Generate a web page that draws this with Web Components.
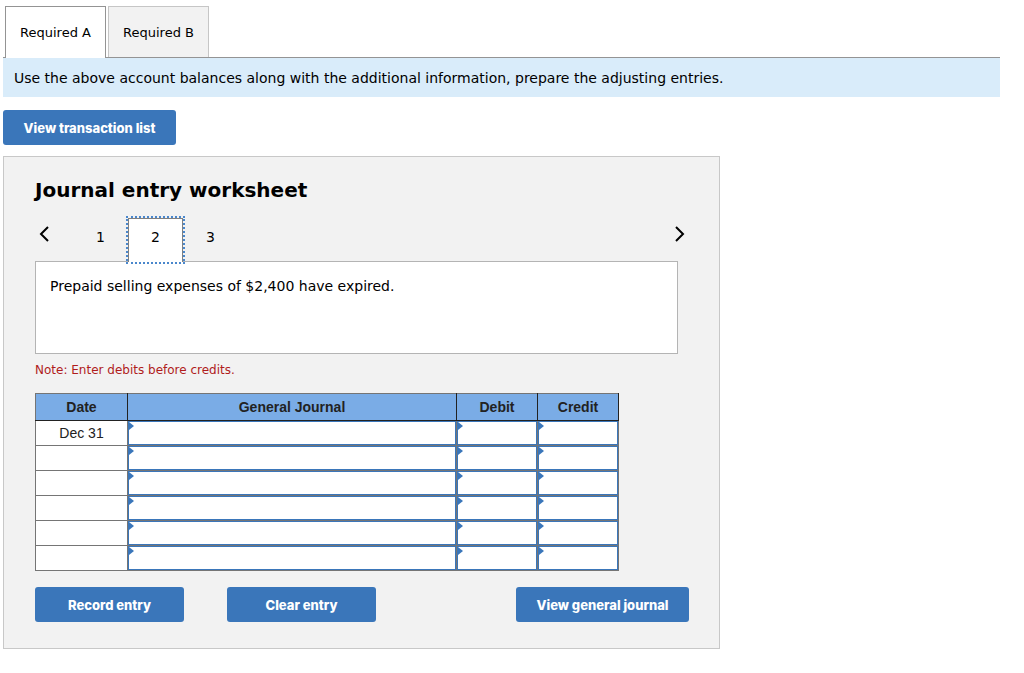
<!DOCTYPE html>
<html lang="en">
<head>
<meta charset="utf-8">
<meta name="viewport" content="width=device-width, initial-scale=1">
<title>Journal entry worksheet</title>
<style>
  body {
    margin: 0;
    padding: 6px 24px 24px 3px;
    background: #fff;
    color: #000;
    font: 14px/20px Verdana, "DejaVu Sans", sans-serif;
    --blue: #3a76ba;
    --panel: #f2f2f2;
  }
  .instructions {
    margin: 0;
    padding: 10px 11px 9px;
    background: #d9ecfa;
  }
  .open-list {
    margin: 13px 0 11px;
  }
</style>
</head>
<body>
  <tab-strip>
    <tab-item selected>Required A</tab-item>
    <tab-item>Required B</tab-item>
  </tab-strip>
  <p class="instructions">Use the above account balances along with the additional information, prepare the adjusting entries.</p>
  <action-button class="open-list" size="large">View transaction list</action-button>
  <journal-worksheet>
    <span slot="title">Journal entry worksheet</span>
    <sheet-pager slot="pager" pages="3" current="2"></sheet-pager>
    <span slot="transaction">Prepaid selling expenses of $2,400 have expired.</span>
    <span slot="note">Note: Enter debits before credits.</span>
    <entry-table slot="entries" date="Dec 31" rows="6"></entry-table>
    <action-button slot="edit">Record entry</action-button>
    <action-button slot="edit">Clear entry</action-button>
    <action-button slot="view" size="large">View general journal</action-button>
  </journal-worksheet>

<script>
  'use strict';
  {
    /**
     * `<tab-strip>` lays its `<tab-item>` children along a bottom rule.
     */
    class TabStrip extends HTMLElement {
      constructor() {
        super();
        this.attachShadow({mode: 'open'});
        this.shadowRoot.innerHTML = `
          <style>
            :host {
              display: flex;
              gap: 2px;
              padding-left: 2px;
              border-bottom: 1px solid #949494;
            }
          </style>
          <slot></slot>
        `;
      }

      connectedCallback() {
        this.setAttribute('role', 'tablist');
      }
    }
    customElements.define('tab-strip', TabStrip);

    class TabItem extends HTMLElement {
      constructor() {
        super();
        this.attachShadow({mode: 'open'});
        this.shadowRoot.innerHTML = `
          <style>
            :host {
              display: block;
            }
            :host([selected]) {
              margin-bottom: -1px;
            }
            button {
              box-sizing: border-box;
              display: block;
              min-width: 101px;
              height: 51px;
              padding: 1px 14px 0;
              border: 1px solid #c6c6c6;
              border-bottom: 0;
              background: var(--panel);
              color: inherit;
              font: 13px/20px Verdana, "DejaVu Sans", sans-serif;
              white-space: nowrap;
            }
            :host([selected]) button {
              height: 52px;
              border-color: #949494;
              background: #fff;
            }
          </style>
          <button type="button" role="tab"><slot></slot></button>
        `;
      }

      connectedCallback() {
        const button = this.shadowRoot.querySelector('button');
        button.setAttribute('aria-selected', this.hasAttribute('selected'));
      }
    }
    customElements.define('tab-item', TabItem);

    /**
     * Solid blue button. `size="large"` is the wider one.
     */
    class ActionButton extends HTMLElement {
      constructor() {
        super();
        this.attachShadow({mode: 'open'});
        this.shadowRoot.innerHTML = `
          <style>
            :host {
              display: block;
            }
            button {
              display: block;
              width: 149px;
              height: 35px;
              padding: 0;
              border: 0;
              border-radius: 3px;
              background: var(--blue);
              color: #fff;
              font: 800 13px/20px Inter, sans-serif;
              white-space: nowrap;
            }
            :host([size="large"]) button {
              width: 173px;
            }
          </style>
          <button type="button"><slot></slot></button>
        `;
      }
    }
    customElements.define('action-button', ActionButton);

    /**
     * Previous / next arrows with a numbered page button for each sheet.
     */
    class SheetPager extends HTMLElement {
      constructor() {
        super();
        this.attachShadow({mode: 'open'});
      }

      connectedCallback() {
        const current = Number(this.getAttribute('current'));
        let pages = '';
        for (let i = 1; i <= Number(this.getAttribute('pages')); i++) {
          pages += `<button type="button" class="page"${i === current ? ' aria-current="page"' : ''}>${i}</button>`;
        }

        this.shadowRoot.innerHTML = `
          <style>
            :host {
              display: flex;
              align-items: flex-start;
            }
            button {
              box-sizing: border-box;
              padding: 0;
              border: 0;
              background: none;
              color: inherit;
              font: 14px/20px Verdana, "DejaVu Sans", sans-serif;
            }
            .arrow {
              width: 18px;
              height: 32px;
            }
            .arrow svg {
              display: block;
              margin: auto;
              fill: none;
              stroke: #000;
              stroke-width: 2;
            }
            .pages {
              display: flex;
              flex: 1;
              padding-left: 20px;
            }
            .page {
              width: 55px;
              height: 43px;
              padding-bottom: 6px;
            }
            .page[aria-current] {
              position: relative;
              height: 44px;
              padding-bottom: 8px;
              border: 1px solid #808080;
              border-bottom: 0;
              margin-bottom: -1px;
              background: #fff;
              outline: 2px dotted #4a87cc;
            }
          </style>
          <button type="button" class="arrow" aria-label="Previous">
            <svg width="12" height="18" viewBox="0 0 12 18"><path d="M10 2 3 9l7 7"/></svg>
          </button>
          <div class="pages">${pages}</div>
          <button type="button" class="arrow" aria-label="Next">
            <svg width="12" height="18" viewBox="0 0 12 18"><path d="m2 2 7 7-7 7"/></svg>
          </button>
        `;
      }
    }
    customElements.define('sheet-pager', SheetPager);

    /**
     * Editable debit / credit grid. The date stands in the first row only.
     */
    class EntryTable extends HTMLElement {
      constructor() {
        super();
        this.attachShadow({mode: 'open'});
      }

      connectedCallback() {
        const columns = ['General Journal', 'Debit', 'Credit'];
        let rows = '';
        for (let i = 1; i <= Number(this.getAttribute('rows')); i++) {
          const cells = columns.map(name =>
            `<td class="entry"><input type="text" aria-label="${name}, row ${i}"></td>`).join('');
          rows += `<tr><td>${i === 1 ? this.getAttribute('date') : ''}</td>${cells}</tr>`;
        }

        this.shadowRoot.innerHTML = `
          <style>
            :host {
              display: block;
              max-width: 584px;
            }
            table {
              width: 100%;
              height: 177px;
              border-collapse: collapse;
              table-layout: fixed;
              background: #fff;
              color: #222;
              font: 14px/20px Arial, "Liberation Sans", sans-serif;
              text-align: center;
            }
            .date {
              width: 92px;
            }
            .amount {
              width: 81px;
            }
            th,
            td {
              padding: 0;
              border: 1px solid #757575;
            }
            th {
              height: 26px;
              background: #7aace6;
              border-right-color: #222;
              border-bottom-color: #222;
            }
            .entry {
              position: relative;
            }
            .entry::before {
              content: "";
              position: absolute;
              top: 1px;
              left: 1px;
              border: 4px solid transparent;
              border-left: 5px solid var(--blue);
              border-right: 0;
            }
            input {
              box-sizing: border-box;
              display: block;
              width: 100%;
              height: 24px;
              padding: 0 8px;
              border: 1px solid var(--blue);
              border-radius: 0;
              background: #fff;
              font: inherit;
            }
          </style>
          <table>
            <colgroup><col class="date"><col><col class="amount"><col class="amount"></colgroup>
            <thead>
              <tr><th scope="col">Date</th>${columns.map(name => `<th scope="col">${name}</th>`).join('')}</tr>
            </thead>
            <tbody>${rows}</tbody>
          </table>
        `;
      }
    }
    customElements.define('entry-table', EntryTable);

    class JournalWorksheet extends HTMLElement {
      constructor() {
        super();
        this.attachShadow({mode: 'open'});
        this.shadowRoot.innerHTML = `
          <style>
            :host {
              box-sizing: border-box;
              display: block;
              max-width: 717px;
              padding: 21px 30px 26px 31px;
              border: 1px solid #c8c8c8;
              background: var(--panel);
            }
            h2 {
              margin: 0 0 16px;
              font-size: 20px;
              line-height: 24px;
            }
            .transaction {
              box-sizing: border-box;
              max-width: 643px;
              min-height: 93px;
              padding: 14px;
              border: 1px solid #b4b4b4;
              background: #fff;
            }
            .note {
              margin: 6px 0 13px;
              color: #b01c1c;
              font-size: 12px;
            }
            .actions {
              display: flex;
              gap: 43px;
              margin-top: 16px;
            }
            .view {
              margin-left: auto;
            }
          </style>
          <h2><slot name="title"></slot></h2>
          <slot name="pager"></slot>
          <div class="transaction"><slot name="transaction"></slot></div>
          <p class="note"><slot name="note"></slot></p>
          <slot name="entries"></slot>
          <div class="actions">
            <slot name="edit"></slot>
            <div class="view"><slot name="view"></slot></div>
          </div>
        `;
      }
    }
    customElements.define('journal-worksheet', JournalWorksheet);
  }
</script>
</body>
</html>
